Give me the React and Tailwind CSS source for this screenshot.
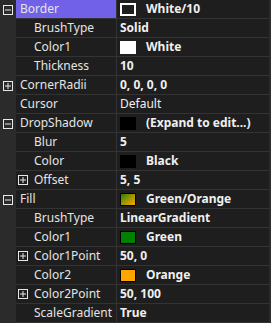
const rows = [
  { name: "Border", level: 0, expander: "minus", selected: true, swatch: "outline", value: "White/10" },
  { name: "BrushType", level: 1, value: "Solid" },
  { name: "Color1", level: 1, swatch: "white", value: "White" },
  { name: "Thickness", level: 1, value: "10" },
  { name: "CornerRadii", level: 0, expander: "plus", value: "0, 0, 0, 0" },
  { name: "Cursor", level: 0, value: "Default", plain: true },
  { name: "DropShadow", level: 0, expander: "minus", swatch: "black", value: "(Expand to edit...)" },
  { name: "Blur", level: 1, value: "5" },
  { name: "Color", level: 1, swatch: "black", value: "Black" },
  { name: "Offset", level: 1, expander: "plus", value: "5, 5" },
  { name: "Fill", level: 0, expander: "minus", swatch: "gradient", value: "Green/Orange" },
  { name: "BrushType", level: 1, value: "LinearGradient" },
  { name: "Color1", level: 1, swatch: "green", value: "Green" },
  { name: "Color1Point", level: 1, expander: "plus", value: "50, 0" },
  { name: "Color2", level: 1, swatch: "orange", value: "Orange" },
  { name: "Color2Point", level: 1, expander: "plus", value: "50, 100" },
  { name: "ScaleGradient", level: 1, value: "True" },
];

const swatchClass = {
  outline: "border-2 border-white bg-[#1e1e1e]",
  white: "bg-white",
  black: "bg-black",
  green: "bg-[#008000] border border-black",
  orange: "bg-[#ffa500] border border-black",
  gradient: "bg-gradient-to-br from-[#008000] to-[#ffa500] border border-black",
};

const Expander = ({ kind }) => (
  <svg width="10" height="10" viewBox="0 0 10 10" className="shrink-0">
    <rect x="0.5" y="0.5" width="9" height="9" fill="none" stroke="#e8e8e8" />
    <line x1="2" y1="5" x2="8" y2="5" stroke="#e8e8e8" />
    {kind === "plus" && <line x1="5" y1="2" x2="5" y2="8" stroke="#e8e8e8" />}
  </svg>
);

const App = () => {
  return (
    <div
      className="w-[271px] h-[323px] overflow-hidden bg-[#1e1e1e] text-[12px] text-[#e4e4e4] flex"
      style={{ fontFamily: '"Segoe UI", "Noto Sans", sans-serif' }}
    >
      <div className="flex-1 flex flex-col">
        {rows.map((row, i) => (
          <div key={i} className="flex h-[19px] shrink-0">
            {/* gutter + level-0 expander */}
            <div className="w-[16px] shrink-0 bg-[#2b2b2b] flex items-center justify-center">
              {row.level === 0 && row.expander && <Expander kind={row.expander} />}
            </div>
            <div className="flex-1 flex border-b border-[#333]">
              <div
                className={`w-[101px] shrink-0 flex items-center border-r border-[#333] ${
                  row.selected ? "bg-[#7160e8]" : ""
                } ${row.level === 0 ? "pl-[4px]" : "pl-[2px]"}`}
              >
                {row.level === 1 && (
                  <div className="w-[16px] shrink-0 flex items-center">
                    {row.expander && <Expander kind={row.expander} />}
                  </div>
                )}
                <span className="whitespace-nowrap leading-none">{row.name}</span>
              </div>
              <div className="flex-1 flex items-center pl-[3px] font-bold text-[#f0f0f0] whitespace-nowrap">
                {row.swatch && (
                  <div className={`w-[16px] h-[13px] mr-[10px] shrink-0 ${swatchClass[row.swatch]}`} />
                )}
                <span className={`leading-none ${row.plain ? "font-normal" : ""}`}>{row.value}</span>
              </div>
            </div>
          </div>
        ))}
      </div>
      <div className="w-[2px] bg-[#2b2b2b]" />
    </div>
  );
};

export default App;
